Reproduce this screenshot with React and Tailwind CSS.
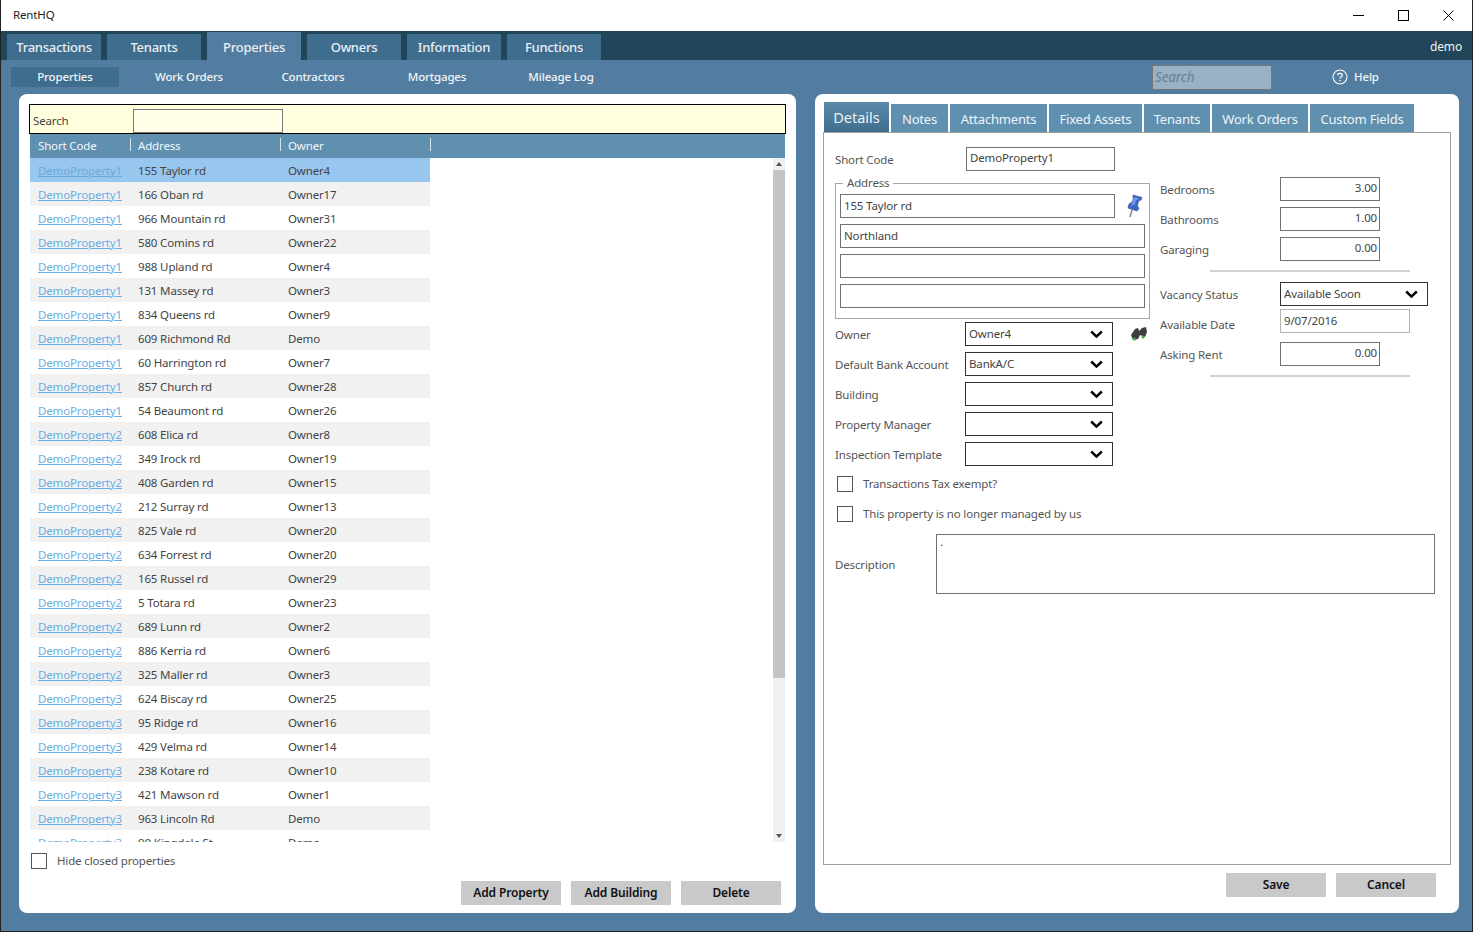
import React from 'react';

const rows = [
  ['DemoProperty1', '155 Taylor rd', 'Owner4'],
  ['DemoProperty1', '166 Oban rd', 'Owner17'],
  ['DemoProperty1', '966 Mountain rd', 'Owner31'],
  ['DemoProperty1', '580 Comins rd', 'Owner22'],
  ['DemoProperty1', '988 Upland rd', 'Owner4'],
  ['DemoProperty1', '131 Massey rd', 'Owner3'],
  ['DemoProperty1', '834 Queens rd', 'Owner9'],
  ['DemoProperty1', '609 Richmond Rd', 'Demo'],
  ['DemoProperty1', '60 Harrington rd', 'Owner7'],
  ['DemoProperty1', '857 Church rd', 'Owner28'],
  ['DemoProperty1', '54 Beaumont rd', 'Owner26'],
  ['DemoProperty2', '608 Elica rd', 'Owner8'],
  ['DemoProperty2', '349 Irock rd', 'Owner19'],
  ['DemoProperty2', '408 Garden rd', 'Owner15'],
  ['DemoProperty2', '212 Surray rd', 'Owner13'],
  ['DemoProperty2', '825 Vale rd', 'Owner20'],
  ['DemoProperty2', '634 Forrest rd', 'Owner20'],
  ['DemoProperty2', '165 Russel rd', 'Owner29'],
  ['DemoProperty2', '5 Totara rd', 'Owner23'],
  ['DemoProperty2', '689 Lunn rd', 'Owner2'],
  ['DemoProperty2', '886 Kerria rd', 'Owner6'],
  ['DemoProperty2', '325 Maller rd', 'Owner3'],
  ['DemoProperty3', '624 Biscay rd', 'Owner25'],
  ['DemoProperty3', '95 Ridge rd', 'Owner16'],
  ['DemoProperty3', '429 Velma rd', 'Owner14'],
  ['DemoProperty3', '238 Kotare rd', 'Owner10'],
  ['DemoProperty3', '421 Mawson rd', 'Owner1'],
  ['DemoProperty3', '963 Lincoln Rd', 'Demo'],
  ['DemoProperty3', '90 Kingdale St', 'Demo'],
];

const mainTabs = ['Transactions', 'Tenants', 'Properties', 'Owners', 'Information', 'Functions'];
const subTabs = ['Properties', 'Work Orders', 'Contractors', 'Mortgages', 'Mileage Log'];
const detailTabs = [
  ['Notes', 'w-[57px]'],
  ['Attachments', 'w-[97px]'],
  ['Fixed Assets', 'w-[93px]'],
  ['Tenants', 'w-[66px]'],
  ['Work Orders', 'w-[96px]'],
  ['Custom Fields', 'w-[104px]'],
];

function Chevron() {
  return (
    <svg width="13" height="9" viewBox="0 0 13 9" className="shrink-0">
      <path d="M1.2 1.5 L6.5 6.6 L11.8 1.5" fill="none" stroke="#000" strokeWidth="2.5" />
    </svg>
  );
}

function TextBox({ value, right, className = '', leading = 'leading-[20px]' }) {
  return (
    <div
      className={`h-6 border bg-white text-[#444] ${leading} ${right ? 'text-right pr-[2px]' : 'pl-[3px]'} ${className}`}
    >
      {value}
    </div>
  );
}

function Select({ value, className = 'w-[148px]' }) {
  return (
    <div className={`flex h-6 items-center justify-between border border-[#333] bg-white pl-[3px] pr-[9px] text-[#444] ${className}`}>
      <span className="-mt-[1px]">{value}</span>
      <Chevron />
    </div>
  );
}

function Checkbox({ className = '' }) {
  return <div className={`h-4 w-4 border border-[#555] bg-white ${className}`} />;
}

function ActionButton({ label }) {
  return (
    <button className="h-6 w-[100px] bg-[#c9c9c9] text-[12px] font-semibold tracking-[-0.15px] text-[#111]">{label}</button>
  );
}

function FormRow({ label, children, labelClass = 'w-[130px] pt-[2px]' }) {
  return (
    <div className="flex h-6 items-center">
      <span className={`${labelClass} text-[#555]`}>{label}</span>
      {children}
    </div>
  );
}

function HeaderCell({ label, width }) {
  return (
    <div className={`relative pl-2 ${width}`}>
      {label}
      <span className="absolute -right-px top-[1px] h-[13px] w-px bg-[#d5e2eb]" />
    </div>
  );
}

function PropertyGrid() {
  return (
    <div className="flex h-[708px] w-[755px] flex-col">
      <div className="flex h-6 items-center bg-[#5f90b0] text-[#f2f6f9]">
        <HeaderCell label="Short Code" width="w-[100px]" />
        <HeaderCell label="Address" width="w-[150px]" />
        <HeaderCell label="Owner" width="w-[150px]" />
      </div>
      <div className="flex h-[684px]">
        <div className="w-[743px] overflow-hidden">
          {rows.map((r, i) => (
            <div
              key={i}
              className={`flex h-6 w-[400px] items-center pt-px ${i === 0 ? 'bg-[#97c6ee]' : i % 2 === 1 ? 'bg-[#f1f1f1]' : 'bg-white'}`}
            >
              <span className={`w-[100px] pl-2 underline ${i === 0 ? 'text-[#6fa9d8]' : 'text-[#6aaee3]'}`}>{r[0]}</span>
              <span className="w-[150px] pl-2 text-[#444]">{r[1]}</span>
              <span className="w-[150px] pl-2 text-[#444]">{r[2]}</span>
            </div>
          ))}
        </div>
        <div className="flex w-3 flex-col bg-[#f0f0f0]">
          <div className="flex h-3 items-center justify-center">
            <svg width="6" height="4" viewBox="0 0 6 4"><path d="M3 0 L6 4 L0 4 Z" fill="#555" /></svg>
          </div>
          <div className="h-[508px] bg-[#c4c4c4]" />
          <div className="flex-1" />
          <div className="flex h-3 items-center justify-center">
            <svg width="6" height="4" viewBox="0 0 6 4"><path d="M0 0 L6 0 L3 4 Z" fill="#555" /></svg>
          </div>
        </div>
      </div>
    </div>
  );
}

function LeftPanel() {
  return (
    <div className="flex h-[819px] w-[777px] flex-col rounded-[8px] bg-white pl-[10px] pt-[10px]">
      <div className="flex h-[30px] w-[757px] items-center border border-black bg-[#ffffdd]">
        <span className="w-[103px] pl-[3px] pt-[4px] text-[#444]">Search</span>
        <div className="mt-[3px] h-6 w-[150px] border border-[#777] bg-[#fffee8]" />
      </div>
      <div className="pl-px">
        <PropertyGrid />
      </div>
      <div className="mt-[10px] flex items-center pl-[2px]">
        <Checkbox />
        <span className="ml-[10px] text-[#555]">Hide closed properties</span>
      </div>
      <div className="mt-[11px] flex w-[752px] justify-end gap-[10px]">
        <ActionButton label="Add Property" />
        <ActionButton label="Add Building" />
        <ActionButton label="Delete" />
      </div>
    </div>
  );
}

function DetailsLeft() {
  return (
    <div className="flex w-[315px] flex-col">
      <FormRow label="Short Code">
        <TextBox value="DemoProperty1" className="ml-px w-[149px] -mt-px border-[#6f6f6f]" />
      </FormRow>
      <fieldset className="mt-[5px] h-[143px] w-[315px] border border-[#a6a6a6] px-1 pt-[4px]">
        <legend className="ml-[3px] px-[4px] leading-[14px] text-[#555]">Address</legend>
        <div className="flex items-center">
          <TextBox value="155 Taylor rd" leading="leading-[22px]" className="w-[275px] border-[#6f6f6f]" />
          <svg width="18" height="24" viewBox="0 0 18 24" className="ml-[11px]">
            <path d="M6 16 L4 23" stroke="#8a8a8a" strokeWidth="1.6" />
            <path d="M7 1 L16 3.5 L15 6 L12.5 7 L11.5 12 L13 14.5 L11 17 L2 14 L3 10 L6 8 L7 6 Z" fill="#3c68c8" stroke="#2a4596" strokeWidth="0.6" />
            <path d="M8 3 L13 4.5 L10 6.5 L8.5 11 L5 11.5 Z" fill="#6f97e6" />
          </svg>
        </div>
        <div className="mt-[6px] flex flex-col gap-[6px]">
          <TextBox value="Northland" leading="leading-[22px]" className="w-[305px] border-[#6f6f6f]" />
          <TextBox value="" className="w-[305px] border-[#6f6f6f]" />
          <TextBox value="" className="w-[305px] border-[#6f6f6f]" />
        </div>
      </fieldset>
      <div className="mt-[3px] flex flex-col gap-[6px]">
        <div className="flex items-center">
          <FormRow label="Owner">
            <Select value="Owner4" />
          </FormRow>
          <svg width="18" height="16" viewBox="0 0 18 16" className="ml-[17px]">
            <path d="M1 9 L5 3 L8 2 L9 5 L12 2 L16 1 L17 6 L15 11 L10 9 L8 13 L3 14 Z" fill="#3e3e3e" />
            <circle cx="4.5" cy="13" r="1.5" fill="#2fb84a" />
            <circle cx="13" cy="11" r="1.5" fill="#2fb84a" />
          </svg>
        </div>
        <FormRow label="Default Bank Account"><Select value="BankA/C" /></FormRow>
        <FormRow label="Building"><Select value="" /></FormRow>
        <FormRow label="Property Manager"><Select value="" /></FormRow>
        <FormRow label="Inspection Template"><Select value="" /></FormRow>
      </div>
      <div className="mt-[9px] flex items-center pl-[2px]">
        <Checkbox />
        <span className="ml-[10px] text-[#555]">Transactions Tax exempt?</span>
      </div>
      <div className="mt-[12px] flex items-center pl-[2px]">
        <Checkbox />
        <span className="ml-[10px] text-[#555]">This property is no longer managed by us</span>
      </div>
    </div>
  );
}

function DetailsRight() {
  return (
    <div className="ml-[10px] flex w-[270px] flex-col pt-[30px]">
      <div className="flex flex-col gap-[6px]">
        <FormRow label="Bedrooms" labelClass="w-[120px] pt-[2px]"><TextBox value="3.00" right className="w-[100px] border-[#6f6f6f]" /></FormRow>
        <FormRow label="Bathrooms" labelClass="w-[120px] pt-[2px]"><TextBox value="1.00" right className="w-[100px] border-[#6f6f6f]" /></FormRow>
        <FormRow label="Garaging" labelClass="w-[120px] pt-[2px]"><TextBox value="0.00" right className="w-[100px] border-[#6f6f6f]" /></FormRow>
      </div>
      <div className="ml-[50px] mt-[9px] h-[2px] w-[200px] bg-[#d2d2d2]" />
      <div className="mt-[10px]">
        <FormRow label="Vacancy Status" labelClass="w-[120px] pt-[2px]"><Select value="Available Soon" /></FormRow>
      </div>
      <div className="mt-[3px]">
        <FormRow label="Available Date" labelClass="w-[120px] pt-[8px]"><TextBox value="9/07/2016" leading="leading-[22px]" className="w-[130px] border-[#b4b4b4]" /></FormRow>
      </div>
      <div className="mt-[9px]">
        <FormRow label="Asking Rent" labelClass="w-[120px] pt-[2px]"><TextBox value="0.00" right className="w-[100px] border-[#6f6f6f]" /></FormRow>
      </div>
      <div className="ml-[50px] mt-[9px] h-[2px] w-[200px] bg-[#d2d2d2]" />
    </div>
  );
}

function RightPanel() {
  return (
    <div className="flex h-[819px] w-[644px] flex-col rounded-[8px] bg-white pl-2 pt-2">
      <div className="flex h-[30px] items-end gap-[2px] pl-px">
        <div className="flex h-[30px] w-[65px] items-center justify-center bg-gradient-to-b from-[#5b8aa9] to-[#3f6d8e] text-[14.5px] tracking-normal text-[#eef4f8]">Details</div>
        {detailTabs.map(([t, w]) => (
          <div key={t} className={`flex h-[28px] items-center justify-center bg-[#5f90b0] pt-px text-[13px] tracking-[-0.2px] text-[#eef4f8] ${w}`}>{t}</div>
        ))}
      </div>
      <div className="h-[733px] w-[628px] border border-[#a0a0a0] pl-[11px] pt-[14px]">
        <div className="flex">
          <DetailsLeft />
          <DetailsRight />
        </div>
        <div className="mt-[11px] flex items-center">
          <span className="w-[101px] pt-[2px] text-[#555]">Description</span>
          <div className="h-[60px] w-[499px] border border-[#6f6f6f] pl-[3px] leading-[14px] text-[#444]">.</div>
        </div>
      </div>
      <div className="mt-[8px] flex w-[613px] justify-end gap-[10px]">
        <ActionButton label="Save" />
        <ActionButton label="Cancel" />
      </div>
    </div>
  );
}

export default function App() {
  return (
    <div
      className="flex h-[932px] w-[1473px] flex-col overflow-hidden border-x border-b border-[#222] bg-[#527da0] text-[11.5px] leading-[18px] tracking-[-0.15px]"
      style={{ fontFamily: '"Noto Sans", "Open Sans", sans-serif' }}
    >
      <div className="flex h-[31px] items-center justify-between bg-white">
        <span className="-mt-[2px] pl-3 text-[#222]">RentHQ</span>
        <div className="flex items-center pr-px">
          <div className="flex h-[31px] w-[45px] items-center justify-center">
            <svg width="11" height="11" viewBox="0 0 11 11"><path d="M0 5.5 H11" stroke="#000" /></svg>
          </div>
          <div className="flex h-[31px] w-[45px] items-center justify-center">
            <svg width="11" height="11" viewBox="0 0 11 11"><rect x="0.5" y="0.5" width="10" height="10" fill="none" stroke="#000" /></svg>
          </div>
          <div className="flex h-[31px] w-[45px] items-center justify-center">
            <svg width="11" height="11" viewBox="0 0 11 11"><path d="M0.5 0.5 L10.5 10.5 M10.5 0.5 L0.5 10.5" stroke="#000" /></svg>
          </div>
        </div>
      </div>

      <div className="flex h-[29px] items-end justify-between bg-[#21465a] pl-[6px]">
        <div className="flex items-end gap-[6px]">
          {mainTabs.map((t) => (
            <div
              key={t}
              className={`flex w-[94px] items-center justify-center pb-px text-[13px] font-medium tracking-[-0.25px] text-[#e8eef3] ${t === 'Properties' ? 'h-[28px] bg-[#527da0] pt-[2px]' : 'h-[26px] bg-[#3f6d8e]'}`}
            >
              {t}
            </div>
          ))}
        </div>
        <span className="self-center pr-[10px] pt-[2px] text-[12px] text-[#f0f0f0]">demo</span>
      </div>

      <div className="flex h-[34px] items-center pl-[10px]">
        <div className="flex gap-[16px]">
          {subTabs.map((t, i) => (
            <div
              key={t}
              className={`flex h-5 w-[108px] items-center justify-center font-medium text-[#f0f4f7] ${i === 0 ? 'bg-[#3f6d8e]' : ''}`}
            >
              {t}
            </div>
          ))}
        </div>
        <div className="ml-[537px] flex h-[25px] w-[120px] items-center border border-[#777] bg-[#97b1c7] pl-[2px] text-[13.5px] italic text-[#6c7f8e]">
          Search
        </div>
        <svg width="16" height="16" viewBox="0 0 16 16" className="ml-[60px]">
          <circle cx="8" cy="8" r="7" fill="none" stroke="#fff" strokeWidth="1.1" />
          <path d="M5.8 6.2 C5.8 3.8 10.2 3.8 10.2 6.2 C10.2 7.8 8 7.8 8 9.6" fill="none" stroke="#fff" strokeWidth="1.2" />
          <circle cx="8" cy="11.6" r="0.8" fill="#fff" />
        </svg>
        <span className="ml-[6px] font-medium text-[#f0f4f7]">Help</span>
      </div>

      <div className="flex gap-[19px] pl-[18px]">
        <LeftPanel />
        <RightPanel />
      </div>
    </div>
  );
}
